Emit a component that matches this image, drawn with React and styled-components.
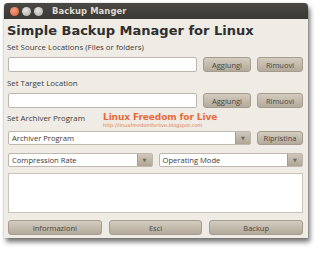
import React from "react";
import styled, { createGlobalStyle } from "styled-components";

const Global = createGlobalStyle`
  html, body { margin: 0; padding: 0; background: #ffffff; }
  body { width: 320px; height: 254px; overflow: hidden; font-family: "DejaVu Sans", sans-serif; }
`;

const Page = styled.div`
  padding: 3px 0 0 4px;
`;

const Window = styled.div`
  width: 304px;
  height: 235px;
  background: #efebe5;
  border-radius: 4px 4px 0 0;
  box-shadow: 2px 4px 5px rgba(0,0,0,0.55), 0 0 1px rgba(0,0,0,0.5);
  display: flex;
  flex-direction: column;
  overflow: hidden;
`;

const TitleBar = styled.div`
  height: 16px;
  background: linear-gradient(#4a4944, #393834);
  display: flex;
  align-items: center;
  padding-left: 6px;
  gap: 3px;
`;

const WinBtn = styled.span`
  width: 9px;
  height: 9px;
  border-radius: 50%;
  background: ${p => p.$close ? "radial-gradient(circle at 40% 35%, #f4a083, #d95d36)" : "radial-gradient(circle at 40% 35%, #e8e6e1, #a9a69f)"};
`;

const Title = styled.span`
  margin-left: 6px;
  color: #dfdbd2;
  font-family: "DejaVu Sans", sans-serif;
  font-weight: bold;
  font-size: 8.4px;
  letter-spacing: 0.1px;
`;

const Body = styled.div`
  flex: 1;
  display: flex;
  flex-direction: column;
  padding: 3px 5px 0 3px;
`;

const Heading = styled.h1`
  margin: 0;
  font-family: "DejaVu Sans", sans-serif;
  font-weight: bold;
  font-size: 13px;
  line-height: 17px;
  color: #2f2f2f;
`;

const Label = styled.div`
  font-family: "Open Sans", sans-serif;
  font-size: 7.9px;
  color: #3c3c3c;
  line-height: 10px;
  margin-top: ${p => p.$mt || 0}px;
  position: relative;
`;

const Row = styled.div`
  display: flex;
  align-items: center;
  gap: 6px;
  margin-top: ${p => p.$mt || 0}px;
  height: ${p => p.$h || 14}px;
`;

const Input = styled.div`
  flex: 1;
  height: 100%;
  box-sizing: border-box;
  background: #fff;
  border: 1px solid #bdb7ad;
  border-radius: 2px;
  margin-left: 1px;
`;

const Btn = styled.div`
  width: ${p => p.$w}px;
  height: 100%;
  box-sizing: border-box;
  background: linear-gradient(#d3ccbf, #b3aa9b);
  border: 1px solid #a59c8d;
  border-radius: 3px;
  display: flex;
  align-items: center;
  justify-content: center;
  font-family: "Open Sans", sans-serif;
  font-size: 7.5px;
  color: #4a4741;
  flex: ${p => p.$grow ? 1 : "none"};
`;

const Combo = styled.div`
  flex: 1;
  height: 100%;
  box-sizing: border-box;
  background: #fff;
  border: 1px solid #bdb7ad;
  border-radius: 2px;
  display: flex;
  align-items: stretch;
  margin-left: ${p => p.$ml || 0}px;
`;

const ComboText = styled.div`
  flex: 1;
  display: flex;
  align-items: center;
  padding-left: 3px;
  font-family: "Open Sans", sans-serif;
  font-size: 7.6px;
  color: #3a3a3a;
`;

const Arrow = styled.div`
  width: 14px;
  background: linear-gradient(#cfc8bb, #aea594);
  border-left: 1px solid #a59c8d;
  display: flex;
  align-items: center;
  justify-content: center;
  color: #6c665c;
  font-size: 5px;
`;

const TextArea = styled.div`
  height: 40px;
  margin-top: 6px;
  margin-left: 1px;
  box-sizing: border-box;
  background: #fff;
  border: 1px solid #c9c3b9;
`;

const Footer = styled.div`
  display: flex;
  gap: 7px;
  margin-top: 7px;
  height: 15px;
  padding-left: 1px;
`;

const Watermark = styled.div`
  position: absolute;
  left: 96px;
  top: -1px;
  pointer-events: none;
`;

const WmTitle = styled.div`
  font-family: "DejaVu Sans", sans-serif;
  font-weight: bold;
  font-size: 9px;
  color: #e2693a;
  line-height: 10px;
  text-shadow: 0 0 1px #fff, 0 0 2px #f7d6c6;
  letter-spacing: -0.1px;
`;

const WmUrl = styled.div`
  font-family: "DejaVu Sans", sans-serif;
  font-size: 5px;
  color: #e07a55;
  line-height: 6px;
`;

export default function App() {
  return (
    <>
      <Global />
      <Page>
        <Window>
          <TitleBar>
            <WinBtn $close />
            <WinBtn />
            <WinBtn />
            <Title>Backup Manger</Title>
          </TitleBar>
          <Body>
            <Heading>Simple Backup Manager for Linux</Heading>
            <Label $mt={3}>Set Source Locations (Files or folders)</Label>
            <Row $mt={5} $h={15}>
              <Input />
              <Btn $w={48}>Aggiungi</Btn>
              <Btn $w={46}>Rimuovi</Btn>
            </Row>
            <Label $mt={6}>Set Target Location</Label>
            <Row $mt={5} $h={15}>
              <Input />
              <Btn $w={48}>Aggiungi</Btn>
              <Btn $w={46}>Rimuovi</Btn>
            </Row>
            <Label $mt={5}>
              Set Archiver Program
              <Watermark>
                <WmTitle>Linux Freedom for Live</WmTitle>
                <WmUrl>http://linuxfreedomforlive.blogspot.com</WmUrl>
              </Watermark>
            </Label>
            <Row $mt={8}>
              <Combo $ml={1}>
                <ComboText>Archiver Program</ComboText>
                <Arrow>▼</Arrow>
              </Combo>
              <Btn $w={46}>Ripristina</Btn>
            </Row>
            <Row $mt={8}>
              <Combo $ml={1}>
                <ComboText>Compression Rate</ComboText>
                <Arrow>▼</Arrow>
              </Combo>
              <Combo>
                <ComboText>Operating Mode</ComboText>
                <Arrow>▼</Arrow>
              </Combo>
            </Row>
            <TextArea />
            <Footer>
              <Btn $grow>Informazioni</Btn>
              <Btn $grow>Esci</Btn>
              <Btn $grow>Backup</Btn>
            </Footer>
          </Body>
        </Window>
      </Page>
    </>
  );
}
